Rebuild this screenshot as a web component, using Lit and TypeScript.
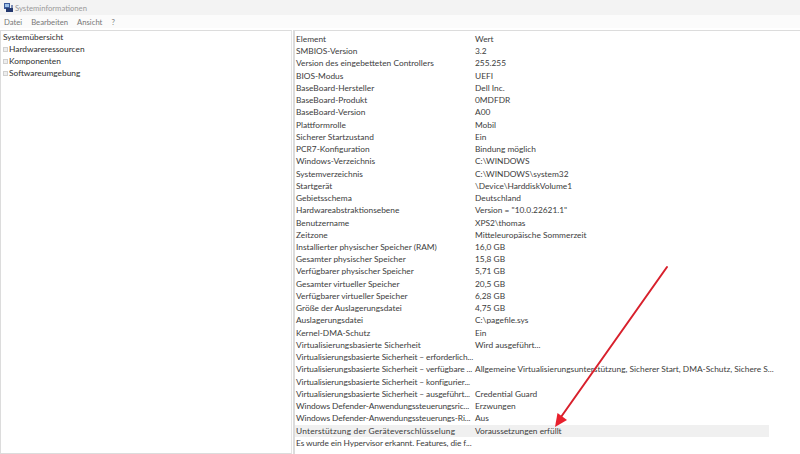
import { LitElement, html, css, svg } from "lit";
import { customElement } from "lit/decorators.js";

const ROWS: [string, string][] = [
  ["Element", "Wert"],
  ["SMBIOS-Version", "3.2"],
  ["Version des eingebetteten Controllers", "255.255"],
  ["BIOS-Modus", "UEFI"],
  ["BaseBoard-Hersteller", "Dell Inc."],
  ["BaseBoard-Produkt", "0MDFDR"],
  ["BaseBoard-Version", "A00"],
  ["Plattformrolle", "Mobil"],
  ["Sicherer Startzustand", "Ein"],
  ["PCR7-Konfiguration", "Bindung möglich"],
  ["Windows-Verzeichnis", "C:\\WINDOWS"],
  ["Systemverzeichnis", "C:\\WINDOWS\\system32"],
  ["Startgerät", "\\Device\\HarddiskVolume1"],
  ["Gebietsschema", "Deutschland"],
  ["Hardwareabstraktionsebene", 'Version = "10.0.22621.1"'],
  ["Benutzername", "XPS2\\thomas"],
  ["Zeitzone", "Mitteleuropäische Sommerzeit"],
  ["Installierter physischer Speicher (RAM)", "16,0 GB"],
  ["Gesamter physischer Speicher", "15,8 GB"],
  ["Verfügbarer physischer Speicher", "5,71 GB"],
  ["Gesamter virtueller Speicher", "20,5 GB"],
  ["Verfügbarer virtueller Speicher", "6,28 GB"],
  ["Größe der Auslagerungsdatei", "4,75 GB"],
  ["Auslagerungsdatei", "C:\\pagefile.sys"],
  ["Kernel-DMA-Schutz", "Ein"],
  ["Virtualisierungsbasierte Sicherheit", "Wird ausgeführt..."],
  ["Virtualisierungsbasierte Sicherheit – erforderlich...", ""],
  ["Virtualisierungsbasierte Sicherheit – verfügbare ...", "Allgemeine Virtualisierungsunterstützung, Sicherer Start, DMA-Schutz, Sichere S..."],
  ["Virtualisierungsbasierte Sicherheit – konfigurier...", ""],
  ["Virtualisierungsbasierte Sicherheit – ausgeführt...", "Credential Guard"],
  ["Windows Defender-Anwendungssteuerungsric...", "Erzwungen"],
  ["Windows Defender-Anwendungssteuerungs-Ri...", "Aus"],
  ["Unterstützung der Geräteverschlüsselung", "Voraussetzungen erfüllt"],
  ["Es wurde ein Hypervisor erkannt. Features, die f...", ""],
];

@customElement("app-root")
export class AppRoot extends LitElement {
  static styles = css`
    :host {
      display: flex;
      flex-direction: column;
      position: relative;
      width: 800px;
      height: 454px;
      overflow: hidden;
      background: #fff;
      font-family: Lato, "Open Sans", sans-serif;
      font-size: 8.35px;
      color: #3c3c3c;
    }
    .title {
      height: 15px;
      flex: none;
      background: #f3f3f3;
      display: flex;
      align-items: center;
      gap: 1px;
      padding-left: 3px;
      color: #9a9a9a;
      font-size: 7.7px;
    }
    .menu {
      height: 15px;
      box-sizing: border-box;
      padding: 0 0 2px 4px;
      flex: none;
      display: flex;
      align-items: center;
      gap: 9px;
      background: linear-gradient(#fbfbfb 13px, #fff 13px);
      color: #777;
      font-size: 7.7px;
    }
    .main {
      flex: 1;
      display: flex;
      gap: 1px;
      background: #fff;
      min-height: 0;
    }
    .tree {
      width: 292px;
      flex: none;
      box-sizing: border-box;
      border: 1px solid #dcdcdc;
      border-right-color: #e4e4e4;
      padding: 0 0 0 2px;
      color: #2e2e2e;
    }
    .node {
      height: 12px;
      line-height: 12px;
      display: flex;
      align-items: center;
      white-space: nowrap;
    }
    .plus {
      width: 3px;
      height: 3px;
      margin-right: 1px;
      flex: none;
      border: 0.5px solid #d0d0d0;
      background: #eeeeee;
      box-sizing: content-box;
    }
    .list {
      flex: 1;
      box-sizing: border-box;
      border-left: 2px solid #dcdcdc;
      border-top: 1px solid #dcdcdc;
      padding: 2px 0 0 0;
      min-width: 0;
    }
    .row {
      display: grid;
      grid-template-columns: 179px 295px;
      width: 474px;
      height: 12.24px;
      line-height: 12.24px;
      white-space: nowrap;
    }
    .row > span {
      padding-left: 1px;
    }
    .row.tight > span:first-child {
      letter-spacing: -0.1px;
    }
    .row.sel {
      background: #f0f0f0;
    }
    .row.sel > span:first-child {
      letter-spacing: 0.2px;
    }
    .arrow {
      position: absolute;
      left: 0;
      top: 0;
      pointer-events: none;
    }
  `;

  render() {
    return html`
      <div class="title">
        <svg width="11" height="11" viewBox="0 0 11 11">
          <rect x="1" y="1" width="6" height="6" fill="#3b5a9a" />
          <rect x="2" y="2" width="4" height="3" fill="#9cc0e8" />
          <rect x="3" y="6" width="7" height="4" fill="#23386e" />
          <rect x="8" y="3" width="2" height="3" fill="#7f8fb5" />
        </svg>
        <span>Systeminformationen</span>
      </div>
      <div class="menu">
        <span>Datei</span><span>Bearbeiten</span><span>Ansicht</span><span>?</span>
      </div>
      <div class="main">
        <div class="tree">
          <div class="node">Systemübersicht</div>
          <div class="node"><span class="plus"></span>Hardwareressourcen</div>
          <div class="node"><span class="plus"></span>Komponenten</div>
          <div class="node"><span class="plus"></span>Softwareumgebung</div>
        </div>
        <div class="list">
          ${ROWS.map(
            ([a, b], i) =>
              html`<div class="row ${i === 32 ? "sel" : ""} ${a.includes("...") ? "tight" : ""}"><span>${a}</span><span>${b}</span></div>`
          )}
        </div>
      </div>
      <svg class="arrow" width="800" height="454" viewBox="0 0 800 454">
        ${svg`<line x1="667" y1="267" x2="561" y2="417" stroke="#d8202c" stroke-width="2" stroke-linecap="round" />
        <polygon points="555,427 557.5,413 567,420" fill="#e8202c" />`}
      </svg>
    `;
  }
}
